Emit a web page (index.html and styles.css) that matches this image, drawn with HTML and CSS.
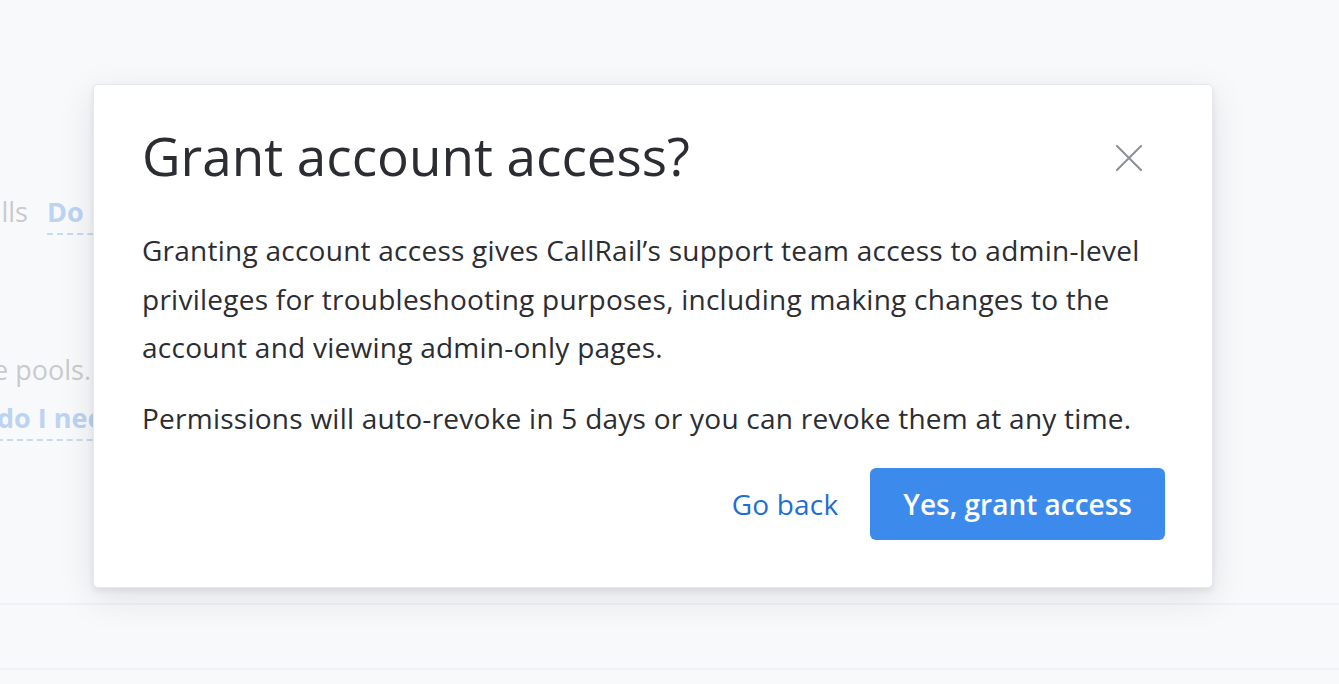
FILE: index.html
```html
<!DOCTYPE html>
<html lang="en">
<head>
<meta charset="utf-8">
<title>Grant account access?</title>
<link rel="stylesheet" href="styles.css">
</head>
<body>
<div class="page">
  <div class="bg-row row-one">
    <span class="bg-cut cut-one"><span class="bg-text">Record calls</span></span>
    <span class="bg-link">Do I need this?</span>
  </div>
  <div class="bg-row row-two">
    <span class="bg-cut cut-two"><span class="bg-text">Track visitors with source pools.</span></span>
  </div>
  <div class="bg-row row-three">
    <span class="bg-link shifted">do I need this?</span>
  </div>
  <div class="bg-footer"></div>
</div>

<div class="modal" role="dialog" aria-labelledby="modal-title">
  <div class="modal-header">
    <h1 id="modal-title" class="modal-title">Grant account access?</h1>
    <button class="close-btn" aria-label="Close">
      <svg width="26" height="26" viewBox="0 0 26 26" aria-hidden="true">
        <path d="M1 1 L25 25 M25 1 L1 25" stroke="#8b9199" stroke-width="2" fill="none" stroke-linecap="square"/>
      </svg>
    </button>
  </div>
  <div class="modal-body">
    <p>Granting account access gives CallRail’s support team access to admin-level privileges for troubleshooting purposes, including making changes to the account and viewing admin-only pages.</p>
    <p>Permissions will auto-revoke in 5 days or you can revoke them at any time.</p>
  </div>
  <div class="modal-footer">
    <button class="link-btn">Go back</button>
    <button class="primary-btn">Yes, grant access</button>
  </div>
</div>
</body>
</html>
```

FILE: styles.css
```css
html, body {
  margin: 0;
  padding: 0;
  height: 100%;
}
body {
  background: #f8f9fb;
  font-family: "Open Sans", "Noto Sans", sans-serif;
  color: #2b2d32;
  overflow: hidden;
}
.page {
  height: 684px;
  display: flex;
  flex-direction: column;
  padding-top: 193px;
  box-sizing: border-box;
}
.bg-row {
  display: flex;
  align-items: baseline;
  font-size: 27px;
  height: 48px;
  white-space: nowrap;
}
.bg-cut {
  display: flex;
  justify-content: flex-end;
  overflow: hidden;
}
.cut-one { width: 28px; }
.cut-two { width: 91px; }
.bg-text { color: #c9cacd; }
.bg-link {
  color: #bcd3f1;
  font-weight: 700;
  border-bottom: 2px dashed #c6daf4;
  padding-bottom: 3px;
  margin-left: 19px;
}
.bg-link.shifted { margin-left: -3px; }
.row-two { margin-top: 110px; }
.bg-footer {
  margin-top: auto;
  margin-bottom: 14px;
  height: 63px;
  border-top: 2px solid #f0f1f4;
  border-bottom: 2px solid #f0f1f4;
}

.modal {
  position: absolute;
  left: 93px;
  top: 84px;
  width: 1120px;
  height: 504px;
  box-sizing: border-box;
  background: #ffffff;
  border-radius: 5px;
  border: 1px solid #e6e8ec;
  box-shadow: 0 3px 6px rgba(20, 24, 34, 0.08), 0 10px 36px rgba(20, 24, 34, 0.10);
  padding: 37px 47px 0 48px;
  display: flex;
  flex-direction: column;
}
.modal-header {
  display: flex;
  justify-content: space-between;
  align-items: flex-start;
}
.modal-title {
  margin: 0;
  font-weight: 400;
  font-size: 53px;
  line-height: 67px;
  color: #2b2d32;
}
.close-btn {
  background: none;
  border: 0;
  padding: 0;
  margin-top: 23px;
  margin-right: 23px;
  width: 26px;
  height: 26px;
  cursor: pointer;
}
.modal-body {
  margin-top: 37px;
}
.modal-body p {
  margin: 0 0 22px;
  font-size: 28px;
  letter-spacing: 0.25px;
  line-height: 48.5px;
}
.modal-footer {
  display: flex;
  justify-content: flex-end;
  align-items: center;
  gap: 32px;
  margin-top: 4px;
}
.link-btn {
  background: none;
  border: 0;
  padding: 0;
  font-family: inherit;
  font-size: 28px;
  letter-spacing: 0.2px;
  color: #1d6fd3;
  cursor: pointer;
}
.primary-btn {
  height: 72px;
  padding: 0 33px;
  background: #3c8bec;
  color: #ffffff;
  border: 0;
  border-radius: 6px;
  font-family: inherit;
  font-size: 28px;
  font-weight: 600;
  cursor: pointer;
}
```
